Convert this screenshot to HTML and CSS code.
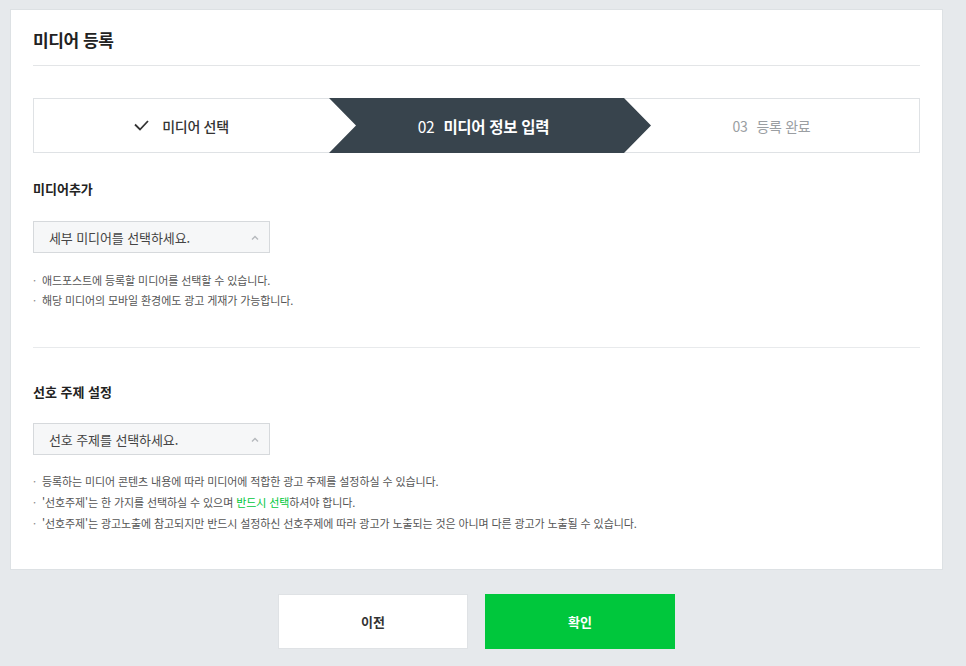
FILE: index.html
```html
<!DOCTYPE html>
<html lang="ko">
<head>
<meta charset="utf-8">
<title>미디어 등록</title>
<link rel="stylesheet" href="styles.css">
</head>
<body>
<div class="card">
  <div class="head"><h1 class="title">미디어 등록</h1></div>
  <div class="steps">
    <div class="step step-done">
      <svg class="check" width="15" height="11" viewBox="0 0 15 11"><polyline points="1,4.5 6,9.5 14,1" fill="none" stroke="#333" stroke-width="1.8"/></svg>
      <span>미디어 선택</span>
    </div>
    <div class="step step-active"><span class="num">02</span><span>미디어 정보 입력</span></div>
    <div class="step step-next"><span class="num">03</span><span>등록 완료</span></div>
  </div>

  <div class="section">
    <h2 class="sec-title">미디어추가</h2>
    <div class="select"><span>세부 미디어를 선택하세요.</span>
      <svg class="caret" width="8" height="5" viewBox="0 0 8 5"><polyline points="1,4.5 4,1.5 7,4.5" fill="none" stroke="#b5b9bd" stroke-width="1.4"/></svg>
    </div>
    <ul class="notes">
      <li>애드포스트에 등록할 미디어를 선택할 수 있습니다.</li>
      <li>해당 미디어의 모바일 환경에도 광고 게재가 가능합니다.</li>
    </ul>
  </div>
  <div class="divider"></div>
  <div class="section section-2">
    <h2 class="sec-title">선호 주제 설정</h2>
    <div class="select"><span>선호 주제를 선택하세요.</span>
      <svg class="caret" width="8" height="5" viewBox="0 0 8 5"><polyline points="1,4.5 4,1.5 7,4.5" fill="none" stroke="#b5b9bd" stroke-width="1.4"/></svg>
    </div>
    <ul class="notes notes-2">
      <li>등록하는 미디어 콘텐츠 내용에 따라 미디어에 적합한 광고 주제를 설정하실 수 있습니다.</li>
      <li>'선호주제'는 한 가지를 선택하실 수 있으며 <em class="hl">반드시 선택</em>하셔야 합니다.</li>
      <li>'선호주제'는 광고노출에 참고되지만 반드시 설정하신 선호주제에 따라 광고가 노출되는 것은 아니며 다른 광고가 노출될 수 있습니다.</li>
    </ul>
  </div>
</div>
<div class="buttons">
  <button class="btn btn-prev">이전</button>
  <button class="btn btn-ok">확인</button>
</div>
</body>
</html>
```

FILE: styles.css
```css
* { box-sizing: border-box; }
html, body { margin: 0; padding: 0; }
body {
  background: #e6e9ec;
  font-family: "Noto Sans CJK KR", "Noto Sans", sans-serif;
  color: #333;
  width: 966px;
  height: 666px;
  overflow: hidden;
}
.card {
  margin: 9px 23px 0 10px;
  background: #fff;
  border: 1px solid #dde1e4;
  padding: 0 22px 35px 22px;
}
.head {
  padding-top: 19px;
  padding-bottom: 14px;
  border-bottom: 1px solid #e3e5e7;
}
.title {
  margin: 0;
  font-size: 17px;
  line-height: 22px;
  font-weight: 700;
  color: #222;
  letter-spacing: -0.4px;
}
.steps {
  margin-top: 32px;
  display: grid;
  grid-template-columns: 1fr 1fr 1fr;
  height: 55px;
  border: 1px solid #dfe2e5;
}
.step {
  display: flex;
  align-items: center;
  justify-content: center;
  font-size: 14px;
  letter-spacing: -0.3px;
}
.step .num { margin-right: 9px; }
.step-done { color: #333; font-weight: 500; }
.check { margin-right: 13px; }
.step-active {
  background: #38444d;
  color: #fff;
  font-size: 15.5px;
  font-weight: 700;
  margin: -1px -27px -1px 0;
  padding-left: 14px;
  padding-right: 27px;
  clip-path: polygon(0 0, calc(100% - 27px) 0, 100% 50%, calc(100% - 27px) 100%, 0 100%, 27px 50%);
  position: relative;
  z-index: 1;
}
.step-active .num { font-weight: 400; }
.step-next { color: #9a9ea2; }
.section { padding-top: 26px; }
.section-2 { padding-top: 34px; }
.sec-title {
  margin: 0;
  font-size: 13px;
  line-height: 20px;
  font-weight: 700;
  color: #222;
}
.select {
  margin-top: 22px;
  width: 237px;
  height: 32px;
  background: #f6f7f8;
  border: 1px solid #d6d9dc;
  display: flex;
  align-items: center;
  justify-content: space-between;
  padding: 0 10px 0 15px;
  font-size: 13px;
  color: #444;
  letter-spacing: -0.1px;
}
.section-2 .select { margin-top: 21px; }
.notes {
  list-style: none;
  margin: 17px 0 0;
  padding: 0;
  font-size: 11px;
  line-height: 20px;
  color: #555;
  letter-spacing: -0.1px;
}
.notes-2 { margin-top: 16px; line-height: 21px; }
.notes li::before { content: "·"; margin-right: 6px; color: #888; }
.hl { font-style: normal; color: #00c73c; }
.divider {
  margin-top: 37px;
  border-top: 1px solid #e8eaec;
}
.buttons {
  display: flex;
  justify-content: center;
  gap: 17px;
  margin-top: 24px;
  padding-left: 10px;
  padding-right: 23px;
}
.btn {
  width: 190px;
  height: 55px;
  font-family: inherit;
  font-size: 13px;
  font-weight: 700;
  border: 1px solid #dfe2e5;
  cursor: pointer;
}
.btn-prev { background: #fff; color: #333; }
.btn-ok { background: #00c73c; border-color: #00c73c; color: #fff; }
```
